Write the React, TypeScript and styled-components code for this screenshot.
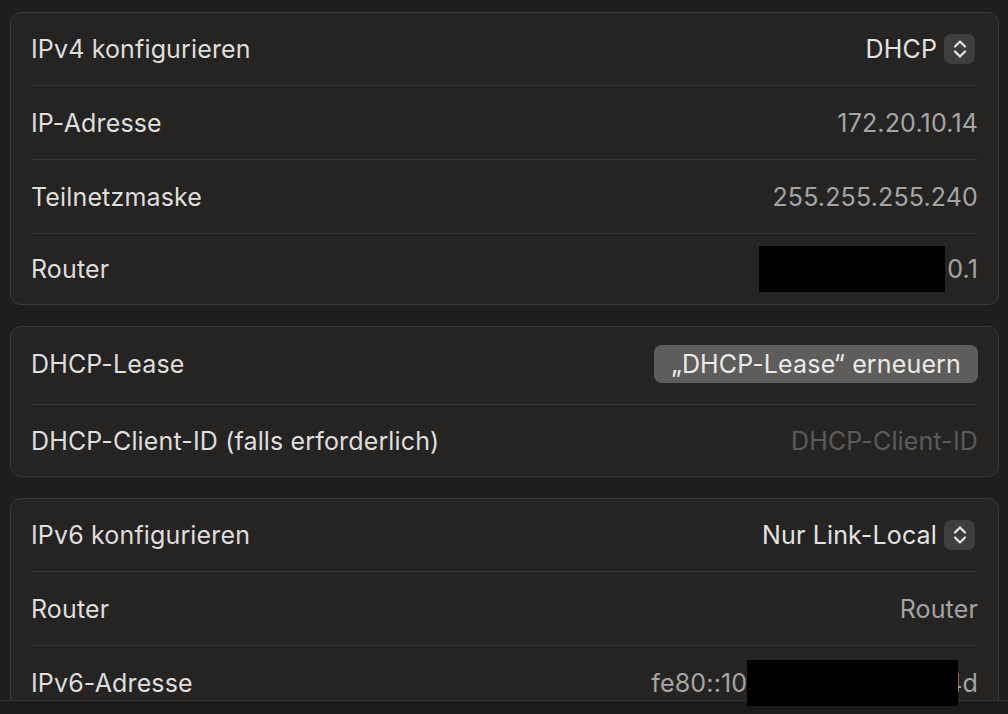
import React from 'react';
import styled, { createGlobalStyle } from 'styled-components';

const GlobalStyle = createGlobalStyle`
  body {
    margin: 0;
    background: #1f1e1d;
    font-family: Inter, "Noto Sans", "Liberation Sans", sans-serif;
  }
`;

const Stepper = () => (
  <StepperBox>
    <svg width="16" height="22" viewBox="0 0 16 22" fill="none">
      <path d="M3 8.5 L8 3.5 L13 8.5" stroke="#e6e5e4" strokeWidth="2.2" strokeLinecap="round" strokeLinejoin="round" />
      <path d="M3 13.5 L8 18.5 L13 13.5" stroke="#e6e5e4" strokeWidth="2.2" strokeLinecap="round" strokeLinejoin="round" />
    </svg>
  </StepperBox>
);

const App: React.FC = () => {
  return (
    <Page>
      <GlobalStyle />

      {/* IPv4 */}
      <Card>
        <Row $height={72}>
          <Label>IPv4 konfigurieren</Label>
          <Popup>
            DHCP
            <Stepper />
          </Popup>
        </Row>
        <Row>
          <Label>IP-Adresse</Label>
          <Value>172.20.10.14</Value>
        </Row>
        <Row>
          <Label>Teilnetzmaske</Label>
          <Value>255.255.255.240</Value>
        </Row>
        <Row $height={70}>
          <Label>Router</Label>
          <Value>
            <Redacted $width={186} />
            0.1
          </Value>
        </Row>
      </Card>

      {/* DHCP */}
      <Card>
        <ActionRow $height={73}>
          <Label>DHCP-Lease</Label>
          <Button>„DHCP-Lease“ erneuern</Button>
        </ActionRow>
        <Row $height={71}>
          <Label>DHCP-Client-ID (falls erforderlich)</Label>
          <Value $muted>DHCP-Client-ID</Value>
        </Row>
      </Card>

      {/* IPv6 */}
      <Card>
        <Row $height={72}>
          <Label>IPv6 konfigurieren</Label>
          <Popup>
            Nur Link-Local
            <Stepper />
          </Popup>
        </Row>
        <Row>
          <Label>Router</Label>
          <Value>Router</Value>
        </Row>
        <Row>
          <Label>IPv6-Adresse</Label>
          <Value>
            fe80::10
            <Redacted $width={211} $overlap={12} />
            4d
          </Value>
        </Row>
      </Card>

      <BottomBar />
    </Page>
  );
};

export default App;

const Page = styled.div`
  height: 714px;
  box-sizing: border-box;
  overflow: hidden;
  padding: 12px 9px 0 10px;
  display: flex;
  flex-direction: column;
  gap: 21px;
`;
const Card = styled.section`
  flex-shrink: 0;
  background: #252423;
  border: 1px solid #3b3a39;
  border-radius: 11px;
`;
const Row = styled.div<{ $height?: number }>`
  height: ${(p) => p.$height ?? 73}px;
  margin: 0 20px;
  display: flex;
  align-items: center;
  justify-content: space-between;
  font-size: 25px;
  letter-spacing: 0.15px;

  & + & {
    border-top: 1px solid #353433;
  }
`;
// 버튼이 있는 행은 살짝 위로
const ActionRow = styled(Row)`
  padding-bottom: 4px;
`;
const Label = styled.span`
  color: #dfdedd;
`;
const Value = styled.span<{ $muted?: boolean }>`
  display: flex;
  align-items: center;
  color: ${(p) => (p.$muted ? '#5c5b5a' : '#a5a4a3')};
`;
const Popup = styled.span`
  display: flex;
  align-items: center;
  gap: 7px;
  margin-right: 3px;
  color: #e3e2e1;
`;
const StepperBox = styled.span`
  width: 31px;
  height: 30px;
  border-radius: 7px;
  background: #3f3e3d;
  display: flex;
  align-items: center;
  justify-content: center;
`;
const Button = styled.button`
  height: 38px;
  padding: 0 17px;
  border: none;
  border-radius: 8px;
  background: #5e5d5c;
  color: #ebeae9;
  font-family: inherit;
  font-size: 25px;
  letter-spacing: 0.15px;
`;
const Redacted = styled.span<{ $width: number; $overlap?: number }>`
  position: relative;
  z-index: 2;
  display: inline-block;
  width: ${(p) => p.$width}px;
  height: 46px;
  margin-right: ${(p) => (p.$overlap ? -p.$overlap : 2)}px;
  background: #000;
`;
const BottomBar = styled.div`
  position: fixed;
  left: 0;
  right: 0;
  bottom: 0;
  z-index: 1;
  height: 13px;
  background: #1c1b1a;
  border-top: 1px solid #363534;
`;
